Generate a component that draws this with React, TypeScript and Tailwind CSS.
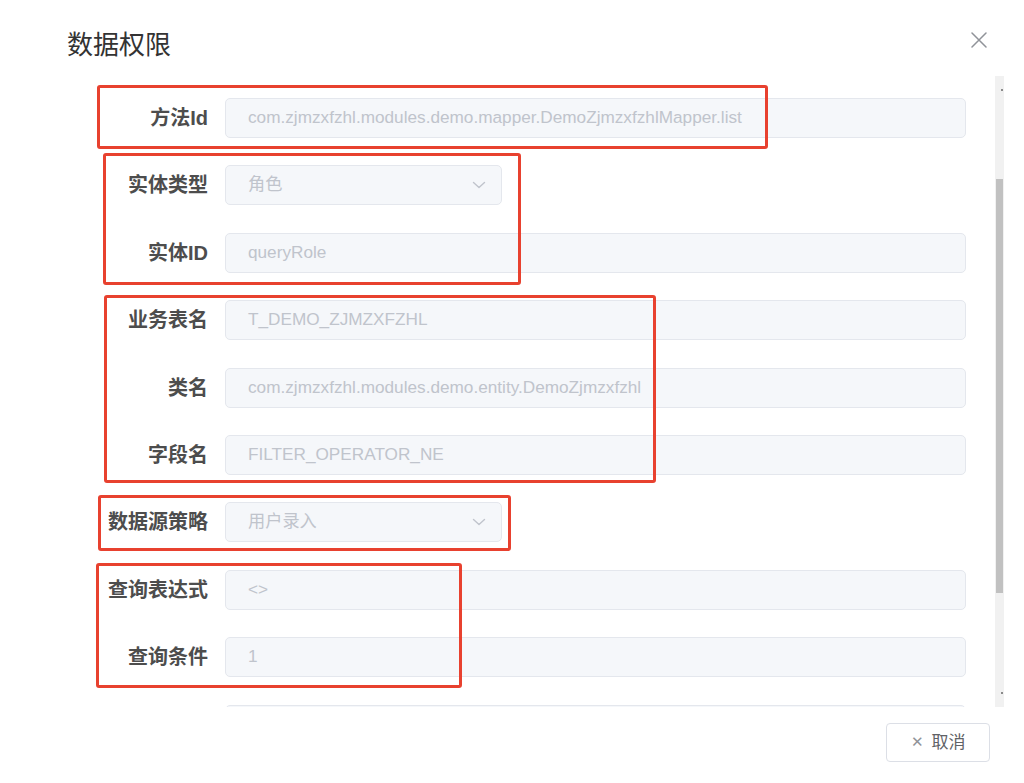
import React from "react";

const font = { fontFamily: '"Liberation Sans", "Noto Sans CJK SC", sans-serif' };

function Chevron() {
  return (
    <svg width="16" height="16" viewBox="0 0 16 16" fill="none">
      <path d="M2.5 5.5 L8 10.5 L13.5 5.5" stroke="#c0c4cc" strokeWidth="1.4" strokeLinecap="round" strokeLinejoin="round" />
    </svg>
  );
}

type Row = { label: string; value: string; select?: boolean };

const rows: Row[] = [
  { label: "方法Id", value: "com.zjmzxfzhl.modules.demo.mapper.DemoZjmzxfzhlMapper.list" },
  { label: "实体类型", value: "角色", select: true },
  { label: "实体ID", value: "queryRole" },
  { label: "业务表名", value: "T_DEMO_ZJMZXFZHL" },
  { label: "类名", value: "com.zjmzxfzhl.modules.demo.entity.DemoZjmzxfzhl" },
  { label: "字段名", value: "FILTER_OPERATOR_NE" },
  { label: "数据源策略", value: "用户录入", select: true },
  { label: "查询表达式", value: "<>" },
  { label: "查询条件", value: "1" },
  { label: "", value: "" },
];

function FieldRow({ r }: { r: Row }) {
  return (
    <div className="flex items-center h-[40px] shrink-0">
      <div className="w-[208px] text-right text-[20px] font-bold text-[#4d4d4d] leading-none" style={font}>
        {r.label}
      </div>
      <div
        className={
          "ml-[17px] h-[40px] rounded-[5px] border border-[#e4e7ed] bg-[#f5f7fa] flex items-center pl-[22px] pr-[14px] " +
          (r.select ? "w-[277px] justify-between" : "w-[741px]")
        }
      >
        <span className="text-[17.2px] text-[#c0c4cc] whitespace-nowrap" style={font}>
          {r.value}
        </span>
        {r.select && <Chevron />}
      </div>
    </div>
  );
}

export default function App() {
  return (
    <div className="relative w-[1024px] h-[783px] bg-white overflow-hidden" style={font}>
      {/* header */}
      <div className="h-[76px] flex items-start justify-between pl-[67px] pr-[37px] pt-[28px]">
        <div className="text-[26px] leading-[34px] text-[#333333]" style={font}>
          数据权限
        </div>
        <svg width="16" height="16" viewBox="0 0 16 16" className="mt-[4px]" fill="none">
          <path d="M1 1 L15 15 M15 1 L1 15" stroke="#909399" strokeWidth="1.5" strokeLinecap="round" />
        </svg>
      </div>

      {/* body */}
      <div className="flex h-[631px]">
        <div className="w-[995px] overflow-hidden">
          <div className="flex flex-col gap-[27.4px] pt-[22px]">
            {rows.map((r, i) => (
              <FieldRow key={i} r={r} />
            ))}
          </div>
        </div>
        <div className="relative w-[9px] h-full bg-[#f1f1f1]">
          <div className="absolute left-[1px] top-[103px] w-[7px] h-[414px] bg-[#c1c1c1]" />
          <div className="absolute left-[6px] top-[13px] w-[2px] h-[2px] bg-[#8a8a8a]" />
          <div className="absolute left-[6px] top-[616px] w-[2px] h-[2px] bg-[#8a8a8a]" />
        </div>
      </div>

      {/* footer */}
      <div className="flex justify-end pr-[34px] pt-[16px]">
        <button className="w-[104px] h-[39px] rounded-[4px] border border-[#dcdfe6] bg-white flex items-center justify-center gap-[8px] text-[17px] text-[#606266]" style={font}>
          <span className="text-[15px] text-[#909399]">✕</span>
          <span>取消</span>
        </button>
      </div>

      {/* red annotation boxes */}
      <div className="absolute left-[97px] top-[85px] w-[671px] h-[64px] border-[3px] border-[#e8412f] rounded-[3px]" />
      <div className="absolute left-[103px] top-[153px] w-[418px] h-[132px] border-[3px] border-[#e8412f] rounded-[3px]" />
      <div className="absolute left-[104px] top-[295px] w-[552px] h-[188px] border-[3px] border-[#e8412f] rounded-[3px]" />
      <div className="absolute left-[98px] top-[495px] w-[413px] h-[56px] border-[3px] border-[#e8412f] rounded-[3px]" />
      <div className="absolute left-[96px] top-[563px] w-[366px] h-[125px] border-[3px] border-[#e8412f] rounded-[3px]" />
    </div>
  );
}
